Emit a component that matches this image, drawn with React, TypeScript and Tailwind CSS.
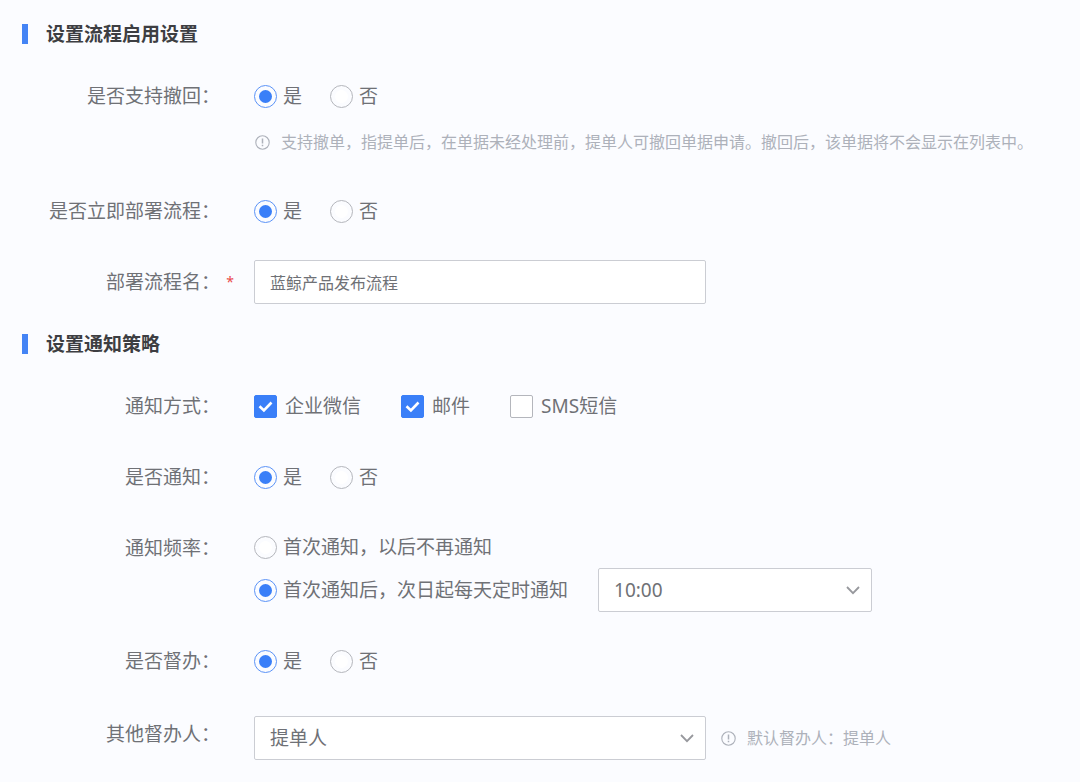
import React, {useState} from 'react';

type FieldProps = {
    label: string;
    htmlFor?: string;
    required?: boolean;
    labelClass?: string;
    className?: string;
    children: React.ReactNode;
};

const Heading = ({children}: { children: React.ReactNode }) => (
    <h2 className="flex items-center gap-[18px] text-[19px] leading-5 font-bold text-[#3d3e42]">
        <span className="w-1.5 h-5 bg-[#4484f5]"/>
        {children}
    </h2>
);

const Field = ({label, htmlFor, required, labelClass = "h-11", className = "", children}: FieldProps) => {
    const text = htmlFor
        ? <label htmlFor={htmlFor}>{label}：</label>
        : <span>{label}：</span>;

    return (
        <div role="group" aria-label={label} className={`flex items-start ${className}`}>
            <div className={`flex items-center justify-end w-[198px] shrink-0 ${labelClass}`}>{text}</div>
            <div className={`flex items-center justify-center w-[34px] shrink-0 pr-3.5 text-sm text-[#ea4a4a] ${labelClass}`}>
                {required && <span>*</span>}
            </div>
            <div className="flex-1 min-w-0">{children}</div>
        </div>
    );
};

type RadioProps = {
    name: string;
    label: string;
    checked: boolean;
    onChange: () => void;
};

const Radio = ({name, label, checked, onChange}: RadioProps) => (
    <label className="flex items-center gap-1.5 cursor-pointer">
        <input
            className="appearance-none size-[23px] shrink-0 p-1 rounded-full border border-[#b4b6bc] bg-white bg-clip-content checked:border-[#5b93f7] checked:bg-[#3a7ff8]"
            type="radio" name={name} checked={checked} onChange={onChange}/>
        {label}
    </label>
);

const YesNo = ({name}: { name: string }) => {
    const [value, setValue] = useState(true);

    return (
        <div className="flex items-center gap-7 h-11">
            <Radio name={name} label="是" checked={value} onChange={() => setValue(true)}/>
            <Radio name={name} label="否" checked={!value} onChange={() => setValue(false)}/>
        </div>
    );
};

const Checkbox = ({label, defaultChecked}: { label: string; defaultChecked?: boolean }) => (
    <label className="flex items-center gap-2 cursor-pointer">
        <span className="relative flex size-[23px] shrink-0">
            <input
                className="peer appearance-none size-full rounded-xs border border-[#b4b6bc] bg-white checked:border-[#3a7ff8] checked:bg-[#3a7ff8]"
                type="checkbox" defaultChecked={defaultChecked}/>
            <svg className="absolute inset-0 hidden peer-checked:block pointer-events-none" viewBox="0 0 23 23"
                 fill="none" stroke="white" strokeWidth="2.6">
                <path d="M5.5 11.2l4.4 4.3 7.6-8"/>
            </svg>
        </span>
        {label}
    </label>
);

const Select = ({id, label, options, className}: { id: string; label?: string; options: string[]; className: string }) => (
    <div className={`relative max-w-full ${className}`}>
        <select
            id={id} aria-label={label}
            className="appearance-none block w-full h-11 pl-[15px] pr-10 rounded-xs border border-[#cbcdd3] bg-white focus:outline-none">
            {options.map(o => <option key={o}>{o}</option>)}
        </select>
        <svg className="absolute right-3 top-4 w-[14px] h-3 pointer-events-none" viewBox="0 0 14 12"
             fill="none" stroke="#97989d" strokeWidth="1.8">
            <path d="M1 3l6 6.2L13 3"/>
        </svg>
    </div>
);

const Hint = ({children}: { children: React.ReactNode }) => (
    <p className="flex items-center gap-[11px] pl-px text-base leading-5 text-[#adb1ba]">
        <svg className="size-[15px] shrink-0" viewBox="0 0 15 15" fill="none" stroke="currentColor">
            <circle cx="7.5" cy="7.5" r="6.7" strokeWidth="1.1"/>
            <path d="M7.5 3.6v4.9M7.5 9.8v1.5" strokeWidth="1.5"/>
        </svg>
        <span>{children}</span>
    </p>
);

const App = () => {
    const [daily, setDaily] = useState(true);

    return (
        <form
            className="min-h-screen bg-[#fbfcff] pt-6 pb-5 pl-[22px] pr-4 text-[19px] leading-6 text-[#6f7176] font-['Noto_Sans','Noto_Sans_CJK_SC',sans-serif]">
            <Heading>设置流程启用设置</Heading>
            <div className="flex flex-col gap-[27px] pt-[30px] pb-[30px]">
                <Field label="是否支持撤回" className="pb-2.5">
                    <YesNo name="withdraw"/>
                    <div className="pt-3.5">
                        <Hint>支持撤单，指提单后，在单据未经处理前，提单人可撤回单据申请。撤回后，该单据将不会显示在列表中。</Hint>
                    </div>
                </Field>
                <Field label="是否立即部署流程">
                    <YesNo name="deploy"/>
                </Field>
                <Field label="部署流程名" htmlFor="flow-name" required>
                    <input
                        className="block w-[452px] max-w-full h-11 px-[15px] rounded-xs border border-[#cbcdd3] bg-white text-base focus:outline-none"
                        id="flow-name" type="text" defaultValue="蓝鲸产品发布流程"/>
                </Field>
            </div>

            <Heading>设置通知策略</Heading>
            <div className="flex flex-col gap-[27px] pt-[30px]">
                <Field label="通知方式">
                    <div className="flex items-center gap-10 h-11">
                        <Checkbox label="企业微信" defaultChecked/>
                        <Checkbox label="邮件" defaultChecked/>
                        <Checkbox label="SMS短信"/>
                    </div>
                </Field>
                <Field label="是否通知">
                    <YesNo name="notify"/>
                </Field>
                <Field label="通知频率">
                    <div className="flex items-center h-[42px]">
                        <Radio name="rate" label="首次通知，以后不再通知" checked={!daily} onChange={() => setDaily(false)}/>
                    </div>
                    <div className="flex items-center gap-[30px]">
                        <Radio name="rate" label="首次通知后，次日起每天定时通知" checked={daily} onChange={() => setDaily(true)}/>
                        <Select id="notify-time" label="通知时间" options={["10:00"]} className="w-[274px]"/>
                    </div>
                </Field>
                <Field label="是否督办">
                    <YesNo name="supervise"/>
                </Field>
                <Field label="其他督办人" htmlFor="supervisor" labelClass="h-9" className="pt-1.5">
                    <div className="flex items-center gap-3.5">
                        <Select id="supervisor" options={["提单人"]} className="w-[452px]"/>
                        <Hint>默认督办人：提单人</Hint>
                    </div>
                </Field>
            </div>
        </form>
    );
};

export default App;
